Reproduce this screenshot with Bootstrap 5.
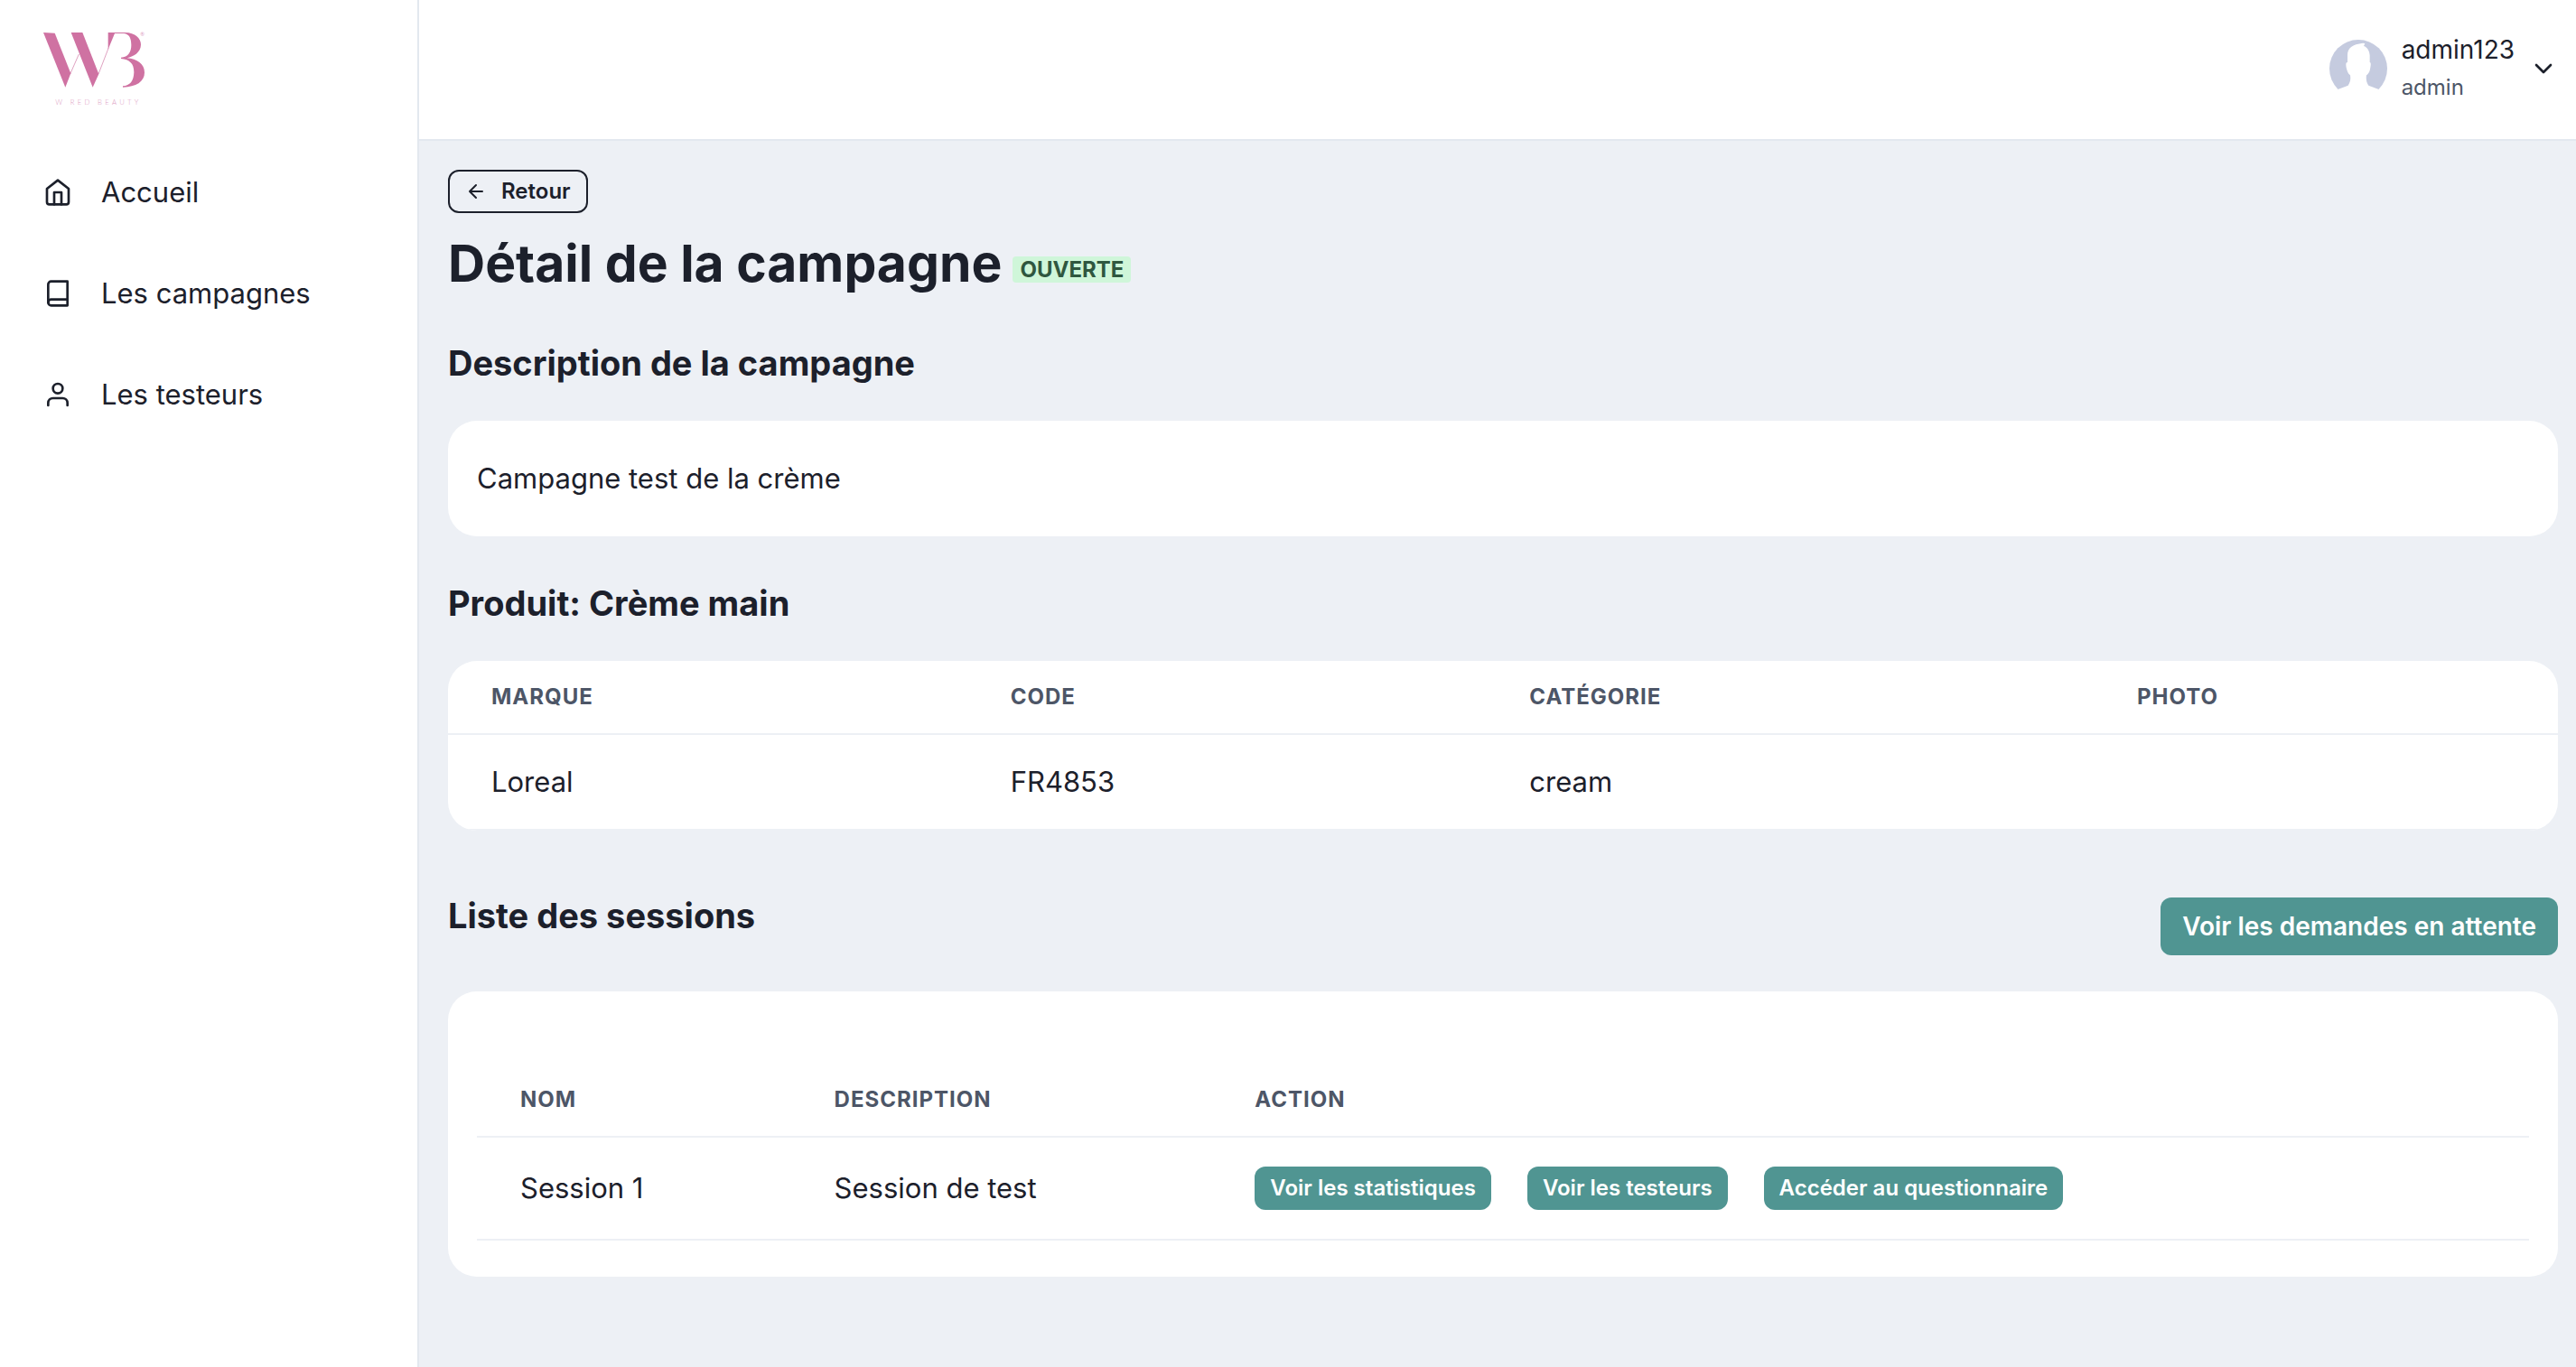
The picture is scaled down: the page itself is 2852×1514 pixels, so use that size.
<!DOCTYPE html>
<html lang="fr">
<head>
<meta charset="utf-8">
<meta name="viewport" content="width=device-width, initial-scale=1">
<title>Détail de la campagne</title>
<link href="https://cdn.jsdelivr.net/npm/bootstrap@5.3.0/dist/css/bootstrap.min.css" rel="stylesheet">
<style>
  :root {
    --ink: #1c202b;
    --ink-soft: #4d5667;
    --line: #e3e8ef;
    --canvas: #edf0f5;
    --teal: #509592;
  }
  body {
    font-family: Inter, "Liberation Sans", sans-serif;
    font-size: 31px;
    line-height: 48px;
    color: var(--ink);
    background: var(--canvas);
  }
  .icon { width: 32px; height: 32px; fill: none; stroke: currentColor; stroke-width: 2; stroke-linecap: round; stroke-linejoin: round; flex: none; }

  .side-panel { width: 464px; border-right: 2px solid var(--line); }
  .brand-link { height: 157px; padding: 36px 48px 0; }
  .brand-link svg { width: 112px; height: 80px; }
  .side-panel .nav-link { gap: 32px; padding: 32px 48px; color: var(--ink); }

  .top-bar { height: 156px; padding: 0 20px 2px 0; border-bottom: 2px solid var(--line); }
  .user-menu { gap: 16px; color: var(--ink); }
  .user-menu .avatar { width: 64px; height: 64px; }
  .user-name { font-size: 28px; line-height: 42px; }
  .user-role { font-size: 24px; line-height: 42px; color: var(--ink-soft); }

  .page-body { padding: 32px 20px 32px 32px; }
  .title-row { gap: 12px; margin-top: 20px; }
  h1 { font-size: 57px; line-height: 72px; font-weight: 700; margin: 0; }
  h2 { font-size: 38px; line-height: 48px; font-weight: 700; margin: 0; }
  .block { margin-top: 50px; }
  .block-sessions { margin-top: 70px; }
  .panel { margin-top: 40px; border-radius: 32px; background: #fff; }
  .panel-text { padding: 40px 32px; }
  .panel-list { padding: 80px 32px 40px; }

  .btn { border-radius: 12px; font-weight: 600; --bs-btn-border-width: 0; }
  .btn-teal { --bs-btn-color: #fff; --bs-btn-bg: var(--teal); --bs-btn-hover-color: #fff; --bs-btn-hover-bg: #3f817e; --bs-btn-active-color: #fff; --bs-btn-active-bg: #356f6c; }
  .btn-small { padding: 0 17px; font-size: 24px; line-height: 48px; }
  .btn-medium { padding: 0 24px; font-size: 28px; line-height: 64px; }
  .btn-back { gap: 16px; border: 2px solid var(--ink); line-height: 44px; color: var(--ink); }
  .btn-back .icon { width: 24px; height: 24px; }
  .status-tag { font-size: 24px; line-height: 29px; font-weight: 700; margin-top: 12px; padding: 0 8px; border-radius: 4px; background: #cff6d9; color: #2f573f; }

  .data-table { --bs-table-bg: transparent; --bs-table-color: var(--ink); margin: 0; border-color: var(--canvas); }
  .data-table > :not(caption) > * > * { padding: 28px 48px; border-bottom: 2px solid var(--canvas); vertical-align: middle; }
  .data-table > thead > tr > th { padding: 24px 48px; font-size: 24px; line-height: 32px; font-weight: 700; letter-spacing: 1px; text-transform: uppercase; color: var(--ink-soft); }
  .sessions > tbody > tr > td { padding-top: 32px; padding-bottom: 32px; }
  .action-list { gap: 40px; }
</style>
<script src="https://cdn.jsdelivr.net/npm/bootstrap@5.3.0/dist/js/bootstrap.bundle.min.js"></script>
</head>
<body>
<div class="d-flex min-vh-100">
  <aside class="side-panel bg-white flex-shrink-0">
    <a class="brand-link d-block" href="#" aria-label="Wired Beauty">
      <svg class="d-block" viewBox="54 48 336 240" overflow="visible">
        <g fill="#cf72a2">
          <path d="M54 48L92 50L145 184L127 230Z"/>
          <path d="M146 48H184L238 186L218 230Z"/>
          <path d="M269 48H325C360 48 378 68 378 88C378 115 352 129 332 133C365 136 390 152 390 181C390 212 362 229 318 230V226C342 224 354 210 355 180C355 150 340 138 312 135V131C336 130 346 112 346 90C346 68 340 54 322 51H291L269 104Z"/>
          <path d="M144 184L172 120M237 186L271 98" stroke="#cf72a2" stroke-width="2" fill="none"/>
        </g>
        <text x="94" y="288" font-family="Lato" font-weight="300" font-size="23" letter-spacing="10" fill="#dc9bbf">W RED BEAUTY</text>
        <text x="376" y="61" font-family="Lato" font-size="17" fill="#dc9bbf">®</text>
      </svg>
    </a>
    <nav class="nav flex-column flex-nowrap" aria-label="Menu principal">
      <a class="nav-link d-flex align-items-center" href="#">
        <svg class="icon" viewBox="0 0 24 24"><path d="M3 9l9-7 9 7v11a2 2 0 0 1-2 2H5a2 2 0 0 1-2-2z"/><path d="M9 22V12h6v10"/></svg>
        Accueil
      </a>
      <a class="nav-link d-flex align-items-center" href="#">
        <svg class="icon" viewBox="0 0 24 24"><path d="M4 19.500A2.500 2.500 0 0 1 6.500 17H20"/><path d="M6.500 2H20v20H6.500A2.500 2.500 0 0 1 4 19.500v-15A2.500 2.500 0 0 1 6.500 2z"/></svg>
        Les campagnes
      </a>
      <a class="nav-link d-flex align-items-center" href="#">
        <svg class="icon" viewBox="0 0 24 24"><path d="M20 21v-2a4 4 0 0 0-4-4H8a4 4 0 0 0-4 4v2"/><circle cx="12" cy="7" r="4"/></svg>
        Les testeurs
      </a>
    </nav>
  </aside>

  <div class="flex-grow-1">
    <header class="top-bar bg-white d-flex align-items-center justify-content-end">
      <button type="button" class="user-menu border-0 bg-transparent p-0 d-flex align-items-center text-start">
        <svg class="avatar" viewBox="120 128 192 192">
          <circle cx="216" cy="224" r="96" fill="#c5cbdf"/>
          <path fill="#fff" d="M180 180C180 155 196 143 232 139L238 141L234 149C246 153 253 165 254 180V203C258 203 258 210 256 220C254 235 250 240 243 246C241 258 243 270 250 280L284 293L310 325H122L148 293L182 280C190 268 191 258 189 246C181 240 179 232 176 220C174 208 175 203 180 203Z"/>
        </svg>
        <span class="d-flex flex-column">
          <span class="user-name">admin123</span>
          <span class="user-role">admin</span>
        </span>
        <svg class="icon" viewBox="0 0 24 24"><path d="M6 9l6 6 6-6"/></svg>
      </button>
    </header>

    <main class="page-body">
      <div class="d-flex">
        <button type="button" class="btn btn-small btn-back d-flex align-items-center">
          <svg class="icon" viewBox="0 0 24 24"><path d="M19 12H5M12 19l-7-7 7-7"/></svg>
          Retour
        </button>
      </div>
      <div class="title-row d-flex align-items-center">
        <h1>Détail de la campagne</h1>
        <span class="status-tag">OUVERTE</span>
      </div>

      <section class="block">
        <h2>Description de la campagne</h2>
        <div class="panel panel-text">Campagne test de la crème</div>
      </section>

      <section class="block">
        <h2>Produit: Crème main</h2>
        <div class="panel overflow-hidden">
          <table class="table data-table">
            <colgroup><col style="width:24.600%"><col style="width:24.600%"><col style="width:28.800%"><col style="width:22%"></colgroup>
            <thead><tr><th>Marque</th><th>Code</th><th>Catégorie</th><th>Photo</th></tr></thead>
            <tbody><tr><td>Loreal</td><td>FR4853</td><td>cream</td><td></td></tr></tbody>
          </table>
        </div>
      </section>

      <section class="block-sessions">
        <div class="d-flex justify-content-between align-items-start">
          <h2>Liste des sessions</h2>
          <button type="button" class="btn btn-teal btn-medium mt-1">Voir les demandes en attente</button>
        </div>
        <div class="panel panel-list">
          <table class="table data-table sessions">
            <colgroup><col style="width:15.300%"><col style="width:20.500%"><col></colgroup>
            <thead><tr><th>Nom</th><th>Description</th><th>Action</th></tr></thead>
            <tbody>
              <tr>
                <td>Session 1</td>
                <td>Session de test</td>
                <td>
                  <div class="action-list d-flex">
                    <button type="button" class="btn btn-teal btn-small">Voir les statistiques</button>
                    <button type="button" class="btn btn-teal btn-small">Voir les testeurs</button>
                    <button type="button" class="btn btn-teal btn-small">Accéder au questionnaire</button>
                  </div>
                </td>
              </tr>
            </tbody>
          </table>
        </div>
      </section>
    </main>
  </div>
</div>
</body>
</html>
